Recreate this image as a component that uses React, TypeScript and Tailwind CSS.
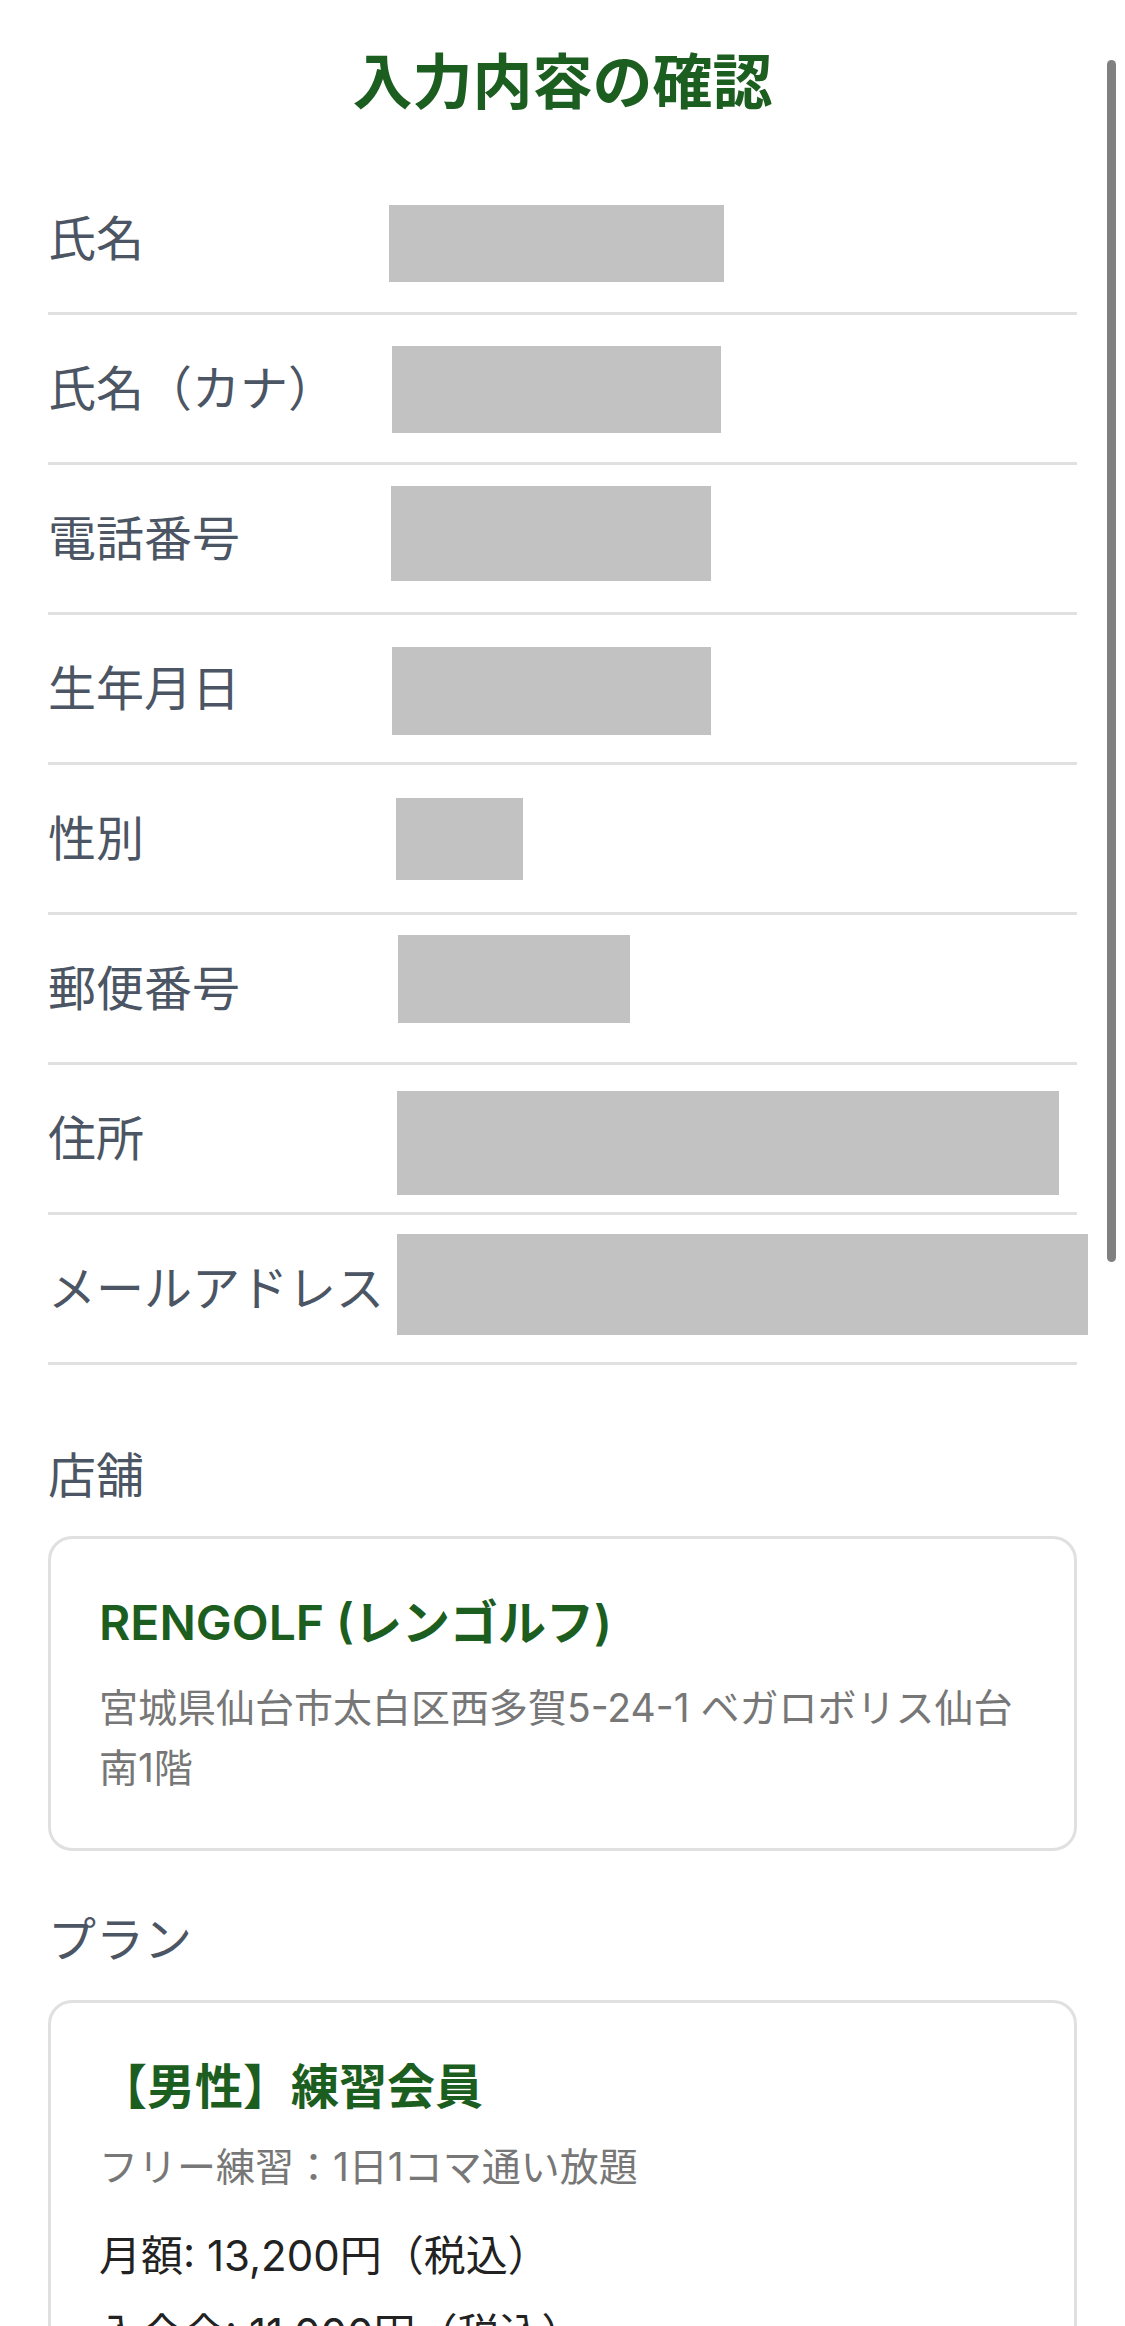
import React from 'react';

const rows = [
  { label: '氏名', box: 'ml-[1px] mt-[40px] w-[335px] h-[77px]' },
  { label: '氏名（カナ）', box: 'ml-[4px] mt-[31px] w-[329px] h-[87px]' },
  { label: '電話番号', box: 'ml-[3px] mt-[21px] w-[320px] h-[95px]' },
  { label: '生年月日', box: 'ml-[4px] mt-[32px] w-[319px] h-[88px]' },
  { label: '性別', box: 'ml-[8px] mt-[33px] w-[127px] h-[82px]' },
  { label: '郵便番号', box: 'ml-[10px] mt-[20px] w-[232px] h-[88px]' },
  { label: '住所', box: 'ml-[9px] mt-[26px] w-[662px] h-[104px]' },
  { label: 'メールアドレス', box: 'ml-[9px] mt-[19px] w-[691px] h-[101px]' },
];

function ConfirmRow({ label, box }: { label: string; box: string }) {
  return (
    <div className="flex h-[150px] border-b-[3px] border-[#e0e0e0]">
      <div className="w-[340px] shrink-0 self-center text-[48px] leading-[72px] text-[#4b5563] whitespace-nowrap">
        {label}
      </div>
      {/* masked value */}
      <div className={`shrink-0 self-start bg-[#c2c2c2] ${box}`} />
    </div>
  );
}

export default function App() {
  return (
    <div className="relative h-[2326px] overflow-hidden bg-white font-[family-name:Inter,'Noto_Sans_CJK_JP',sans-serif]">
      <div className="px-12">
        <h1 className="pt-[40px] mb-[41px] text-center text-[60px] leading-[84px] font-bold text-[#1b5e20]">
          入力内容の確認
        </h1>

        <div>
          {rows.map((r) => (
            <ConfirmRow key={r.label} label={r.label} box={r.box} />
          ))}
        </div>

        {/* Store */}
        <div className="mt-[75px] mb-[24px] text-[48px] leading-[72px] text-[#4b5563]">店舗</div>
        <div className="rounded-[24px] border-[3px] border-[#e0e0e0] px-[48px] pt-[48px] pb-[50px]">
          <div className="text-[48px] leading-[72px] font-semibold text-[#1b5e20]">RENGOLF (レンゴルフ)</div>
          <p className="mt-[19px] text-[39px] leading-[60px] text-[#777777]">
            宮城県仙台市太白区西多賀5-24-1 ベガロボリス仙台南1階
          </p>
        </div>

        {/* Plan */}
        <div className="mt-[53px] mb-[24px] text-[48px] leading-[72px] text-[#4b5563]">プラン</div>
        <div className="rounded-[24px] border-[3px] border-[#e0e0e0] p-[48px]">
          <div className="text-[48px] leading-[72px] font-bold text-[#1b5e20]">【男性】練習会員</div>
          <p className="mt-[14px] text-[39px] leading-[60px] text-[#777777]">フリー練習：1日1コマ通い放題</p>
          <div className="mt-[27px] flex flex-col gap-[15px] text-[42px] leading-[63px] text-[#222222]">
            <p>月額: 13,200円（税込）</p>
            <p>入会金: 11,000円（税込）</p>
            <p>事務手数料: 3,300円（税込）</p>
          </div>
        </div>
      </div>

      {/* scroll indicator */}
      <div className="absolute right-[9px] top-[60px] h-[1202px] w-[9px] rounded-full bg-[#808080]" />
    </div>
  );
}
